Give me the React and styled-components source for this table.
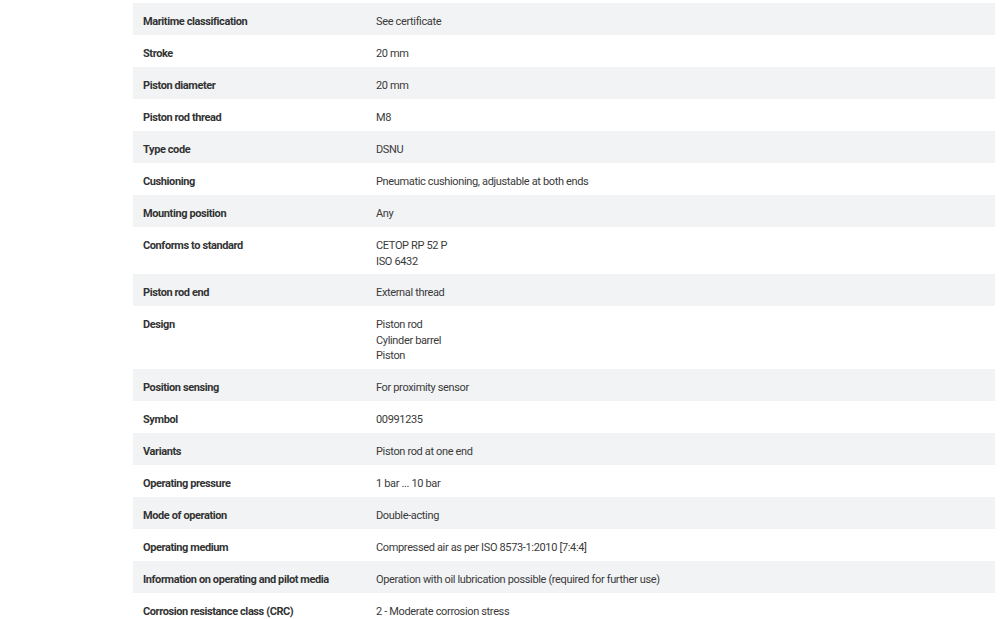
import React from 'react'
import styled, { createGlobalStyle } from 'styled-components'

const GlobalStyle = createGlobalStyle`
  html, body {
    margin: 0;
    background: #fff;
  }
  body {
    font-family: Roboto, "Liberation Sans", sans-serif;
    color: #333;
  }
`

const Page = styled.div`
  padding: 3px 5px 0 133px;
`

const Table = styled.div`
  display: flex;
  flex-direction: column;
`

const Row = styled.div`
  display: grid;
  grid-template-columns: 233px 1fr;
  background: ${(p) => (p.$shaded ? '#f2f3f5' : '#fff')};
`

const Label = styled.div`
  padding: 11px 10px 5px;
  font-size: 11px;
  line-height: 16px;
  font-weight: 700;
  letter-spacing: -0.4px;
  white-space: nowrap;
  color: #333;
`

const Value = styled.div`
  padding: 11px 10px 5px;
  font-size: 11px;
  line-height: 15.5px;
  letter-spacing: -0.35px;
  color: #3a3a3a;
`

const rows = [
  ['Maritime classification', ['See certificate']],
  ['Stroke', ['20 mm']],
  ['Piston diameter', ['20 mm']],
  ['Piston rod thread', ['M8']],
  ['Type code', ['DSNU']],
  ['Cushioning', ['Pneumatic cushioning, adjustable at both ends']],
  ['Mounting position', ['Any']],
  ['Conforms to standard', ['CETOP RP 52 P', 'ISO 6432']],
  ['Piston rod end', ['External thread']],
  ['Design', ['Piston rod', 'Cylinder barrel', 'Piston']],
  ['Position sensing', ['For proximity sensor']],
  ['Symbol', ['00991235']],
  ['Variants', ['Piston rod at one end']],
  ['Operating pressure', ['1 bar ... 10 bar']],
  ['Mode of operation', ['Double-acting']],
  ['Operating medium', ['Compressed air as per ISO 8573-1:2010 [7:4:4]']],
  ['Information on operating and pilot media', ['Operation with oil lubrication possible (required for further use)']],
  ['Corrosion resistance class (CRC)', ['2 - Moderate corrosion stress']],
]

const App = () => {
  return (
    <Page>
      <GlobalStyle />
      <Table>
        {rows.map(([label, values], i) => (
          <Row key={label} $shaded={i % 2 === 0}>
            <Label>{label}</Label>
            <Value>
              {values.map((v) => (
                <div key={v}>{v}</div>
              ))}
            </Value>
          </Row>
        ))}
      </Table>
    </Page>
  )
}

export default App
